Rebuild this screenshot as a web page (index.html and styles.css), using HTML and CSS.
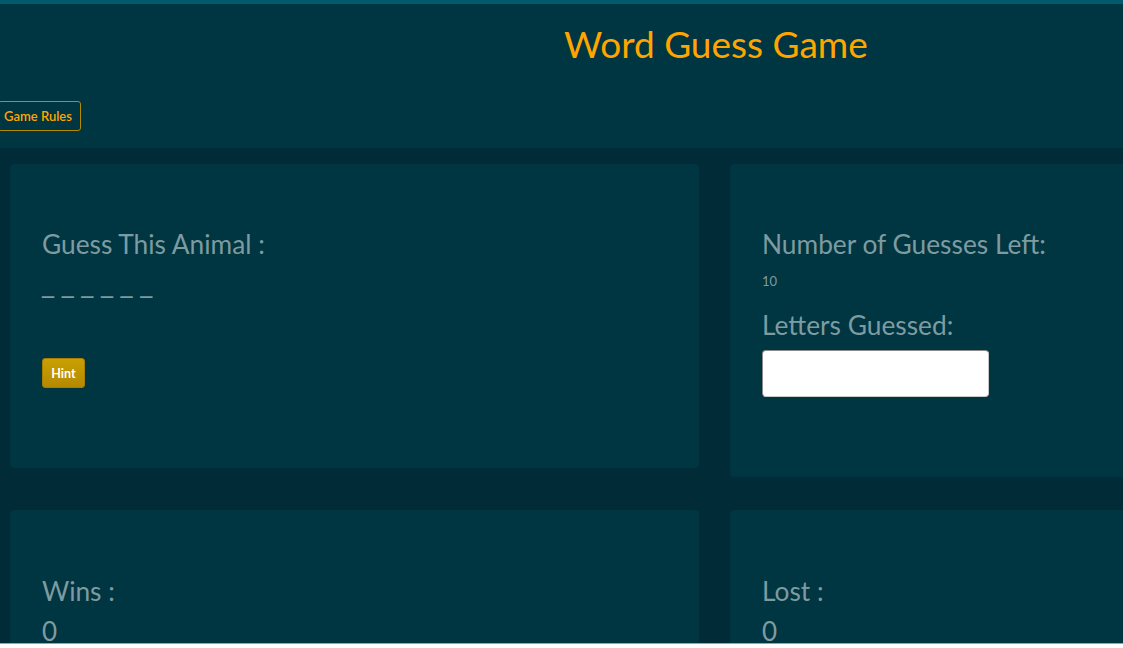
FILE: index.html
```html
<!DOCTYPE html>
<html lang="en">
<head>
<meta charset="utf-8">
<title>Word Guess Game</title>
<link rel="stylesheet" href="styles.css">
</head>
<body>
<header class="header">
  <h1 class="title">Word Guess Game</h1>
  <button class="rules-btn">Game Rules</button>
</header>
<main class="board">
  <section class="card card-word">
    <h2 class="label">Guess This Animal :</h2>
    <p class="blanks">_ _ _ _ _ _</p>
    <button class="hint-btn">Hint</button>
  </section>
  <section class="card card-status">
    <h2 class="label">Number of Guesses Left:</h2>
    <p class="small-num">10</p>
    <h2 class="label">Letters Guessed:</h2>
    <input class="guessed" type="text">
  </section>
  <section class="card card-score">
    <h2 class="label">Wins :</h2>
    <p class="score">0</p>
  </section>
  <section class="card card-score">
    <h2 class="label">Lost :</h2>
    <p class="score">0</p>
  </section>
</main>
<div class="scroll-strip"></div>
</body>
</html>
```
FILE: styles.css
```css
html, body {
  margin: 0;
  padding: 0;
}
body {
  background: #002b37;
  font-family: Lato, "Open Sans", sans-serif;
  color: #7e9ba0;
  width: 1123px;
  overflow: hidden;
  height: 648px;
}
.header {
  background: #003542;
  border-top: 4px solid #005b6e;
  height: 144px;
  display: flex;
  flex-direction: column;
}
.title {
  margin: 20px 0 0 564px;
  font-size: 37px;
  font-weight: 400;
  line-height: 40px;
  color: #ffa500;
}
.rules-btn {
  margin: 37px 0 0 -2px;
  align-self: flex-start;
  height: 30px;
  padding: 0 8px 0 5px;
  background: transparent;
  border: 1px solid #b58900;
  border-radius: 3px;
  color: #ffa500;
  font-family: inherit;
  font-size: 13px;
  font-weight: 600;
}
.board {
  display: grid;
  grid-template-columns: 689px 689px;
  column-gap: 31px;
  row-gap: 33px;
  align-items: start;
  padding: 16px 0 0 10px;
}
.card {
  background: #003542;
  border-radius: 4px;
  padding: 64px 32px 80px;
  display: flex;
  flex-direction: column;
  align-items: flex-start;
}
.label {
  margin: 0;
  font-size: 26.3px;
  font-weight: 400;
  line-height: 32px;
}
.blanks {
  margin: 8px 0 0;
  font-family: "DejaVu Sans", sans-serif;
  font-size: 24px;
  line-height: 32px;
  height: 32px;
}
.hint-btn {
  margin-top: 58px;
  height: 30px;
  width: 43px;
  padding: 0;
  background: linear-gradient(#c9a000, #b58900);
  border: 1px solid #a67e00;
  border-radius: 3px;
  color: #ffffff;
  font-family: inherit;
  font-size: 12.5px;
  font-weight: 700;
}
.small-num {
  margin: 13px 0 0;
  font-size: 13px;
  line-height: 16px;
}
.small-num + .label {
  margin-top: 20px;
}
.guessed {
  margin-top: 9px;
  width: 227px;
  height: 47px;
  box-sizing: border-box;
  border: 1px solid #c8c8c8;
  border-top-color: #8a8a8a;
  border-left-color: #8a8a8a;
  border-radius: 4px;
  background: #ffffff;
}
.card-score {
  padding-top: 65px;
}
.score {
  margin: 8px 0 0;
  font-size: 26px;
  line-height: 32px;
}
.scroll-strip {
  position: fixed;
  left: 0;
  right: 0;
  bottom: 0;
  height: 4px;
  background: #ffffff;
  border-top: 1px solid #a0a0a0;
}
```
